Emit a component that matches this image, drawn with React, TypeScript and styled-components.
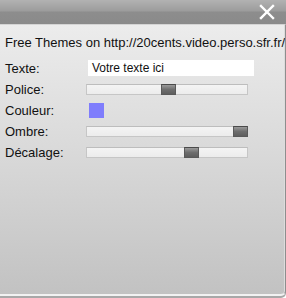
import React from "react";
import styled, { createGlobalStyle } from "styled-components";

const Global = createGlobalStyle`
  html, body { margin: 0; padding: 0; background: #ffffff; }
  body { font-family: "Liberation Sans", Arial, sans-serif; }
`;

const Window = styled.div`
  width: 286px;
  height: 298px;
  box-sizing: border-box;
  display: flex;
  flex-direction: column;
  background: #a8a8a8;
  overflow: hidden;
  border-bottom-right-radius: 5px;
`;

const TitleBar = styled.div`
  height: 24px;
  flex: none;
  display: flex;
  justify-content: flex-end;
  align-items: center;
  padding-right: 11px;
  background: linear-gradient(
    to bottom,
    #b2b2b2 0px,
    #9c9c9c 11px,
    #8d8d8d 12px,
    #8a8a8a 24px
  );
`;

const Close = styled.svg`
  width: 16px;
  height: 16px;
  display: block;
`;

const Body = styled.div`
  flex: 1;
  display: flex;
  flex-direction: column;
  border-top: 1px solid #d4d4d4;
  border-right: 1px solid #8e8e8e;
  border-bottom: 2px solid #f2f2f2;
  box-shadow: inset -1px 0 0 #dcdcdc;
  margin-bottom: 2px;
  border-bottom-right-radius: 5px;
  background: linear-gradient(to bottom, #ececec 0%, #dadada 45%, #c2c2c2 100%);
  padding: 11px 0 0 5px;
  font-size: 13px;
  color: #111;
  white-space: nowrap;
  overflow: hidden;
`;

const Credit = styled.div`
  line-height: 14px;
  height: 21px;
`;

const Form = styled.div`
  display: grid;
  grid-template-columns: 81px 1fr;
  grid-auto-rows: 21px;
  align-items: center;
`;

const Label = styled.div`
  line-height: 14px;
  padding-top: 2px;
`;

const TextInput = styled.div`
  width: 166px;
  height: 16px;
  margin-left: 2px;
  margin-top: 1px;
  background: #ffffff;
  box-sizing: border-box;
  padding-left: 4px;
  line-height: 16px;
  font-size: 12px;
  color: #111;
`;

const Track = styled.div`
  position: relative;
  width: 162px;
  height: 11px;
  margin-top: 2px;
  box-sizing: border-box;
  border: 1px solid #c6c6c6;
  border-top-color: #bdbdbd;
  background: linear-gradient(to bottom, #f4f4f4, #ececec);
`;

const Thumb = styled.div`
  position: absolute;
  top: -1px;
  width: 15px;
  height: 11px;
  box-sizing: border-box;
  border: 1px solid #5a5a5a;
  border-top-color: #4a4a4a;
  background: linear-gradient(to bottom, #9a9a9a, #6e6e6e 50%, #5e5e5e);
`;

const Swatch = styled.div<{ $color: string }>`
  width: 15px;
  height: 15px;
  margin-left: 3px;
  margin-top: 2px;
  background: ${(p) => p.$color};
`;

const Slider = ({ pos }: { pos: number }) => (
  <Track>
    <Thumb style={{ left: pos }} />
  </Track>
);

export default function App() {
  return (
    <>
      <Global />
      <Window>
        <TitleBar>
          <Close viewBox="0 0 16 16">
            <path
              d="M2 2 L14 14 M14 2 L2 14"
              stroke="#ffffff"
              strokeWidth="2.4"
              strokeLinecap="square"
            />
          </Close>
        </TitleBar>
        <Body>
          <Credit>Free Themes on http://20cents.video.perso.sfr.fr/</Credit>
          <Form>
            <Label>Texte:</Label>
            <TextInput>Votre texte ici</TextInput>
            <Label>Police:</Label>
            <Slider pos={74} />
            <Label>Couleur:</Label>
            <Swatch $color="#7f7dfc" />
            <Label>Ombre:</Label>
            <Slider pos={146} />
            <Label>Décalage:</Label>
            <Slider pos={97} />
          </Form>
        </Body>
      </Window>
    </>
  );
}
